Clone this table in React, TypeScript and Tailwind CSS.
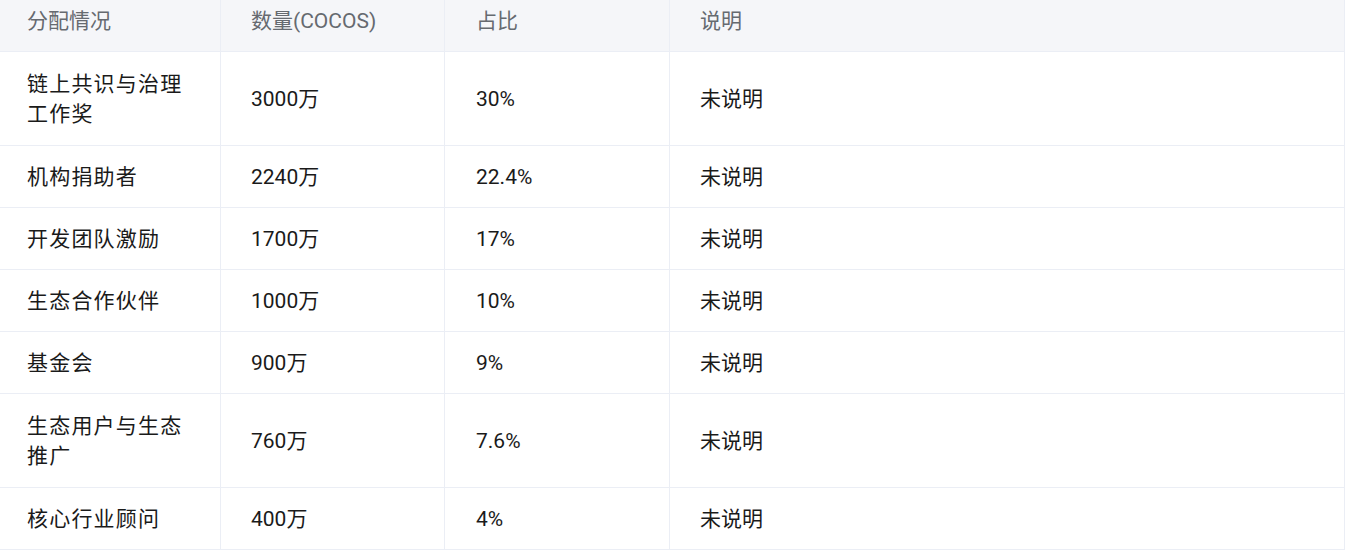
const rows = [
  { name: '链上共识与治理工作奖', amount: '3000万', ratio: '30%', note: '未说明', tall: true },
  { name: '机构捐助者', amount: '2240万', ratio: '22.4%', note: '未说明', tall: false },
  { name: '开发团队激励', amount: '1700万', ratio: '17%', note: '未说明', tall: false },
  { name: '生态合作伙伴', amount: '1000万', ratio: '10%', note: '未说明', tall: false },
  { name: '基金会', amount: '900万', ratio: '9%', note: '未说明', tall: false },
  { name: '生态用户与生态推广', amount: '760万', ratio: '7.6%', note: '未说明', tall: true },
  { name: '核心行业顾问', amount: '400万', ratio: '4%', note: '未说明', tall: false },
];

const cols = 'grid grid-cols-[221px_224px_225px_675px]';

export default function App() {
  return (
    <div
      className="w-[1345px] bg-white text-[21px] leading-[30px]"
      style={{ fontFamily: 'Roboto, "Noto Sans CJK SC", sans-serif' }}
    >
      {/* header */}
      <div className={`${cols} h-[52px] bg-[#f5f6f9] text-[#666a70] border-b border-[#ebeef5]`}>
        <div className="pl-[27px] pt-[6px] border-r border-[#ebeef5]">分配情况</div>
        <div className="pl-[30px] pt-[6px] border-r border-[#ebeef5]">数量(COCOS)</div>
        <div className="pl-[31px] pt-[6px] border-r border-[#ebeef5]">占比</div>
        <div className="pl-[30px] pt-[6px] border-r border-[#ebeef5]">说明</div>
      </div>

      {/* body */}
      {rows.map((r) => (
        <div
          key={r.name}
          className={`${cols} ${r.tall ? 'h-[94px]' : 'h-[62px]'} text-[#1a1a1a] border-b border-[#ebeef5]`}
        >
          <div className="flex items-center pl-[27px] pr-[24px] tracking-[1.2px] border-r border-[#ebeef5]">
            <span>{r.name}</span>
          </div>
          <div className="flex items-center pl-[30px] border-r border-[#ebeef5]">{r.amount}</div>
          <div className="flex items-center pl-[31px] border-r border-[#ebeef5]">{r.ratio}</div>
          <div className="flex items-center pl-[30px] border-r border-[#ebeef5]">{r.note}</div>
        </div>
      ))}
    </div>
  );
}
